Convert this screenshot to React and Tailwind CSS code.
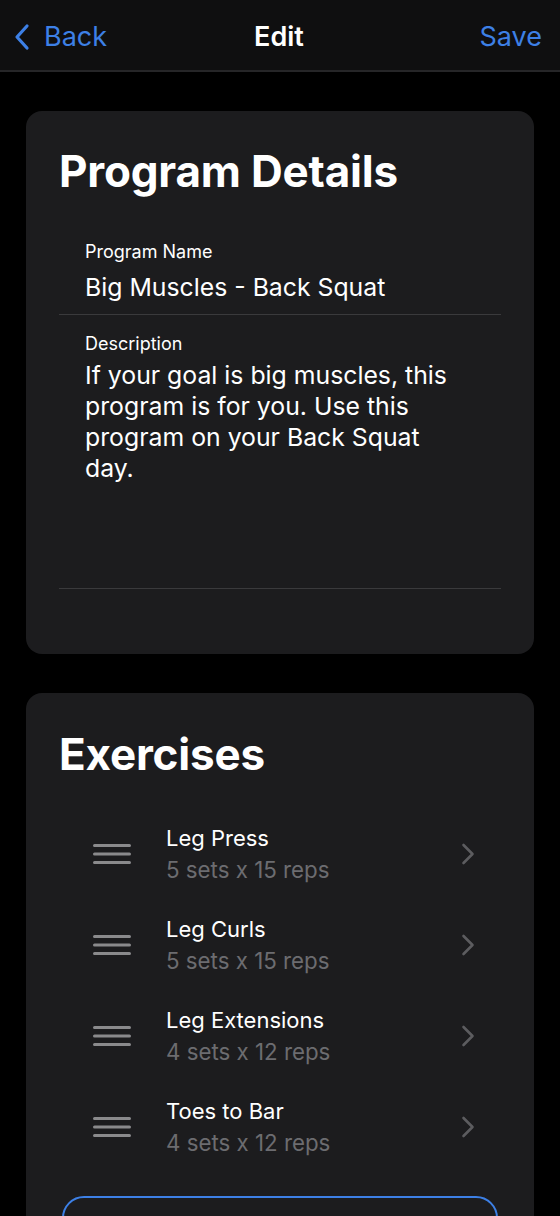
import React from 'react'

const EXERCISES = [
  { name: 'Leg Press', detail: '5 sets x 15 reps' },
  { name: 'Leg Curls', detail: '5 sets x 15 reps' },
  { name: 'Leg Extensions', detail: '4 sets x 12 reps' },
  { name: 'Toes to Bar', detail: '4 sets x 12 reps' },
]

function BackChevron() {
  return (
    <svg viewBox="0 0 16 28" className="h-[28px] w-[16px]" fill="none" aria-hidden>
      <path
        d="M13 3L3 14l10 11"
        stroke="currentColor"
        strokeWidth="3.2"
        strokeLinecap="round"
        strokeLinejoin="round"
      />
    </svg>
  )
}

function DragHandle() {
  return (
    <svg viewBox="0 0 38 22" className="h-[22px] w-[38px] text-[#8a8a8c]" fill="none" aria-hidden>
      <path
        d="M1.5 2.5h35M1.5 11h35M1.5 19.5h35"
        stroke="currentColor"
        strokeWidth="3"
        strokeLinecap="round"
      />
    </svg>
  )
}

function RowChevron() {
  return (
    <svg viewBox="0 0 14 22" className="h-[22px] w-[14px] text-[#5c5c5f]" fill="none" aria-hidden>
      <path
        d="M2.5 2l9 9-9 9"
        stroke="currentColor"
        strokeWidth="2.6"
        strokeLinecap="round"
        strokeLinejoin="round"
      />
    </svg>
  )
}

function Field({ label, children }) {
  return (
    <div className="pl-[26px] pr-[36px]">
      <div className="text-[18px] leading-[24px] text-white">{label}</div>
      {children}
    </div>
  )
}

export default function App() {
  return (
    <div className="min-h-[1216px] bg-black font-['Inter',sans-serif] text-white">
      <header className="grid h-[72px] grid-cols-3 items-center border-b-2 border-[#262628] bg-[#0f0f10] pl-[14px] pr-[18px] pt-[3px]">
        <button className="flex items-center gap-[14px] justify-self-start text-[#3d80e6]">
          <BackChevron />
          <span className="text-[27px] leading-none">Back</span>
        </button>
        <h1 className="justify-self-center pl-[2px] text-[27px] font-semibold leading-none">Edit</h1>
        <button className="justify-self-end text-[27px] leading-none text-[#3d80e6]">Save</button>
      </header>

      <main className="flex flex-col gap-[39px] px-[26px] pt-[39px]">
        <section className="rounded-[16px] bg-[#1c1c1e] pl-[33px] pr-[33px] pt-[36px] pb-[65px]">
          <h2 className="text-[44px] font-bold leading-[48px] tracking-[-0.2px]">Program Details</h2>
          <div className="mt-[45px]">
            <Field label="Program Name">
              <div className="mt-[7px] pb-[11px] text-[24.8px] leading-[32px]">Big Muscles - Back Squat</div>
            </Field>
            <div className="h-px bg-[#3a3a3c]" />
            <div className="pt-[17px]">
              <Field label="Description">
                <p className="mt-[4px] h-[228px] text-[24.8px] leading-[31px]">
                  If your goal is big muscles, this program is for you. Use this program on your Back Squat day.
                </p>
              </Field>
            </div>
            <div className="h-px bg-[#3a3a3c]" />
          </div>
        </section>

        <section className="rounded-[16px] bg-[#1c1c1e] px-[33px] pt-[37px] pb-[40px]">
          <h2 className="text-[44px] font-bold leading-[48px] tracking-[-0.2px]">Exercises</h2>
          <ul className="mt-[30px] flex flex-col">
            {EXERCISES.map((ex) => (
              <li key={ex.name} className="flex h-[91px] items-center pl-[34px] pr-[26px]">
                <DragHandle />
                <div className="ml-[35px] flex-1">
                  <div className="text-[22px] leading-[28px]">{ex.name}</div>
                  <div className="mt-[4px] text-[22.3px] leading-[28px] text-[#6c6c70]">{ex.detail}</div>
                </div>
                <RowChevron />
              </li>
            ))}
          </ul>
          <button
            aria-label="Add Exercise"
            className="mx-[3px] mt-[24px] block h-[58px] w-[436px] rounded-[22px] border-2 border-[#3d80e6]"
          />
        </section>
      </main>
    </div>
  )
}
